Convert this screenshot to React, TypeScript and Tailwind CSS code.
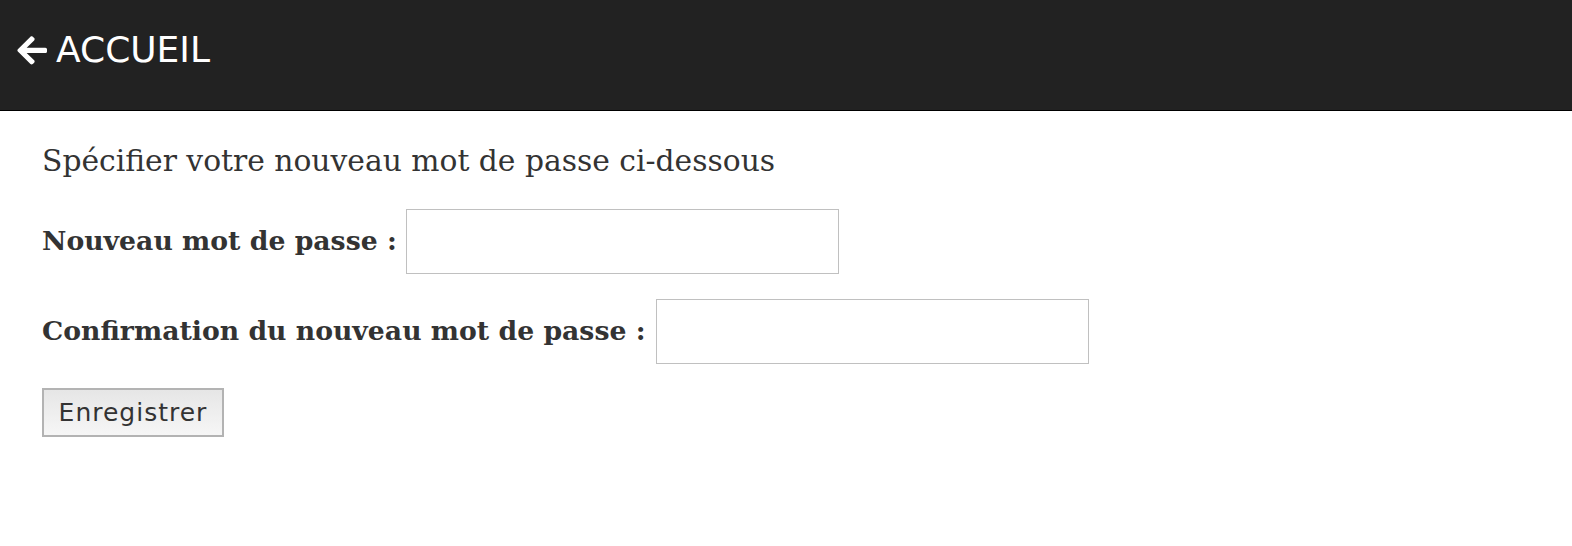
export default function App() {
  return (
    <div className="min-h-[546px] bg-white">
      <header className="flex h-[111px] items-center border-b border-black bg-[#222222] pb-[11px] pl-[17px]">
        <a href="#" className="flex items-center gap-[9px] text-white">
          <svg width="30" height="31" viewBox="0 0 448 448" fill="currentColor" aria-hidden="true">
            <path d="M257 420 235 442c-9 9-24 9-34 0L13 254c-9-9-9-24 0-34L201 32c9-9 24-9 34 0l22 22c9 10 9 25-1 34L144 196h280c13 0 24 11 24 24v32c0 13-11 24-24 24H144l112 108c10 9 10 24 1 34z" />
          </svg>
          <span className="font-['DejaVu_Sans',sans-serif] text-[36px] leading-none">ACCUEIL</span>
        </a>
      </header>

      <main className="flex flex-col items-start px-[42px] pt-[33px] font-['DejaVu_Serif',serif] text-[#333333]">
        <p className="text-[29.75px] leading-[34px]">Spécifier votre nouveau mot de passe ci-dessous</p>

        <div className="mt-[31px] flex items-center gap-[9px]">
          <label className="text-[26.7px] font-bold">Nouveau mot de passe :</label>
          <input type="password" className="h-[65px] w-[433px] border border-[#c0c0c0] bg-white" />
        </div>

        <div className="mt-[25px] flex items-center gap-[10px]">
          <label className="text-[26.7px] font-bold">Confirmation du nouveau mot de passe :</label>
          <input type="password" className="h-[65px] w-[433px] border border-[#c0c0c0] bg-white" />
        </div>

        <button className="mt-[24px] h-[49px] w-[182px] border-2 border-[#b3b3b3] bg-gradient-to-b from-[#e6e6e6] to-[#f6f6f6] font-['DejaVu_Sans',sans-serif] text-[25px] tracking-[1px] text-[#333333]">
          Enregistrer
        </button>
      </main>
    </div>
  );
}
